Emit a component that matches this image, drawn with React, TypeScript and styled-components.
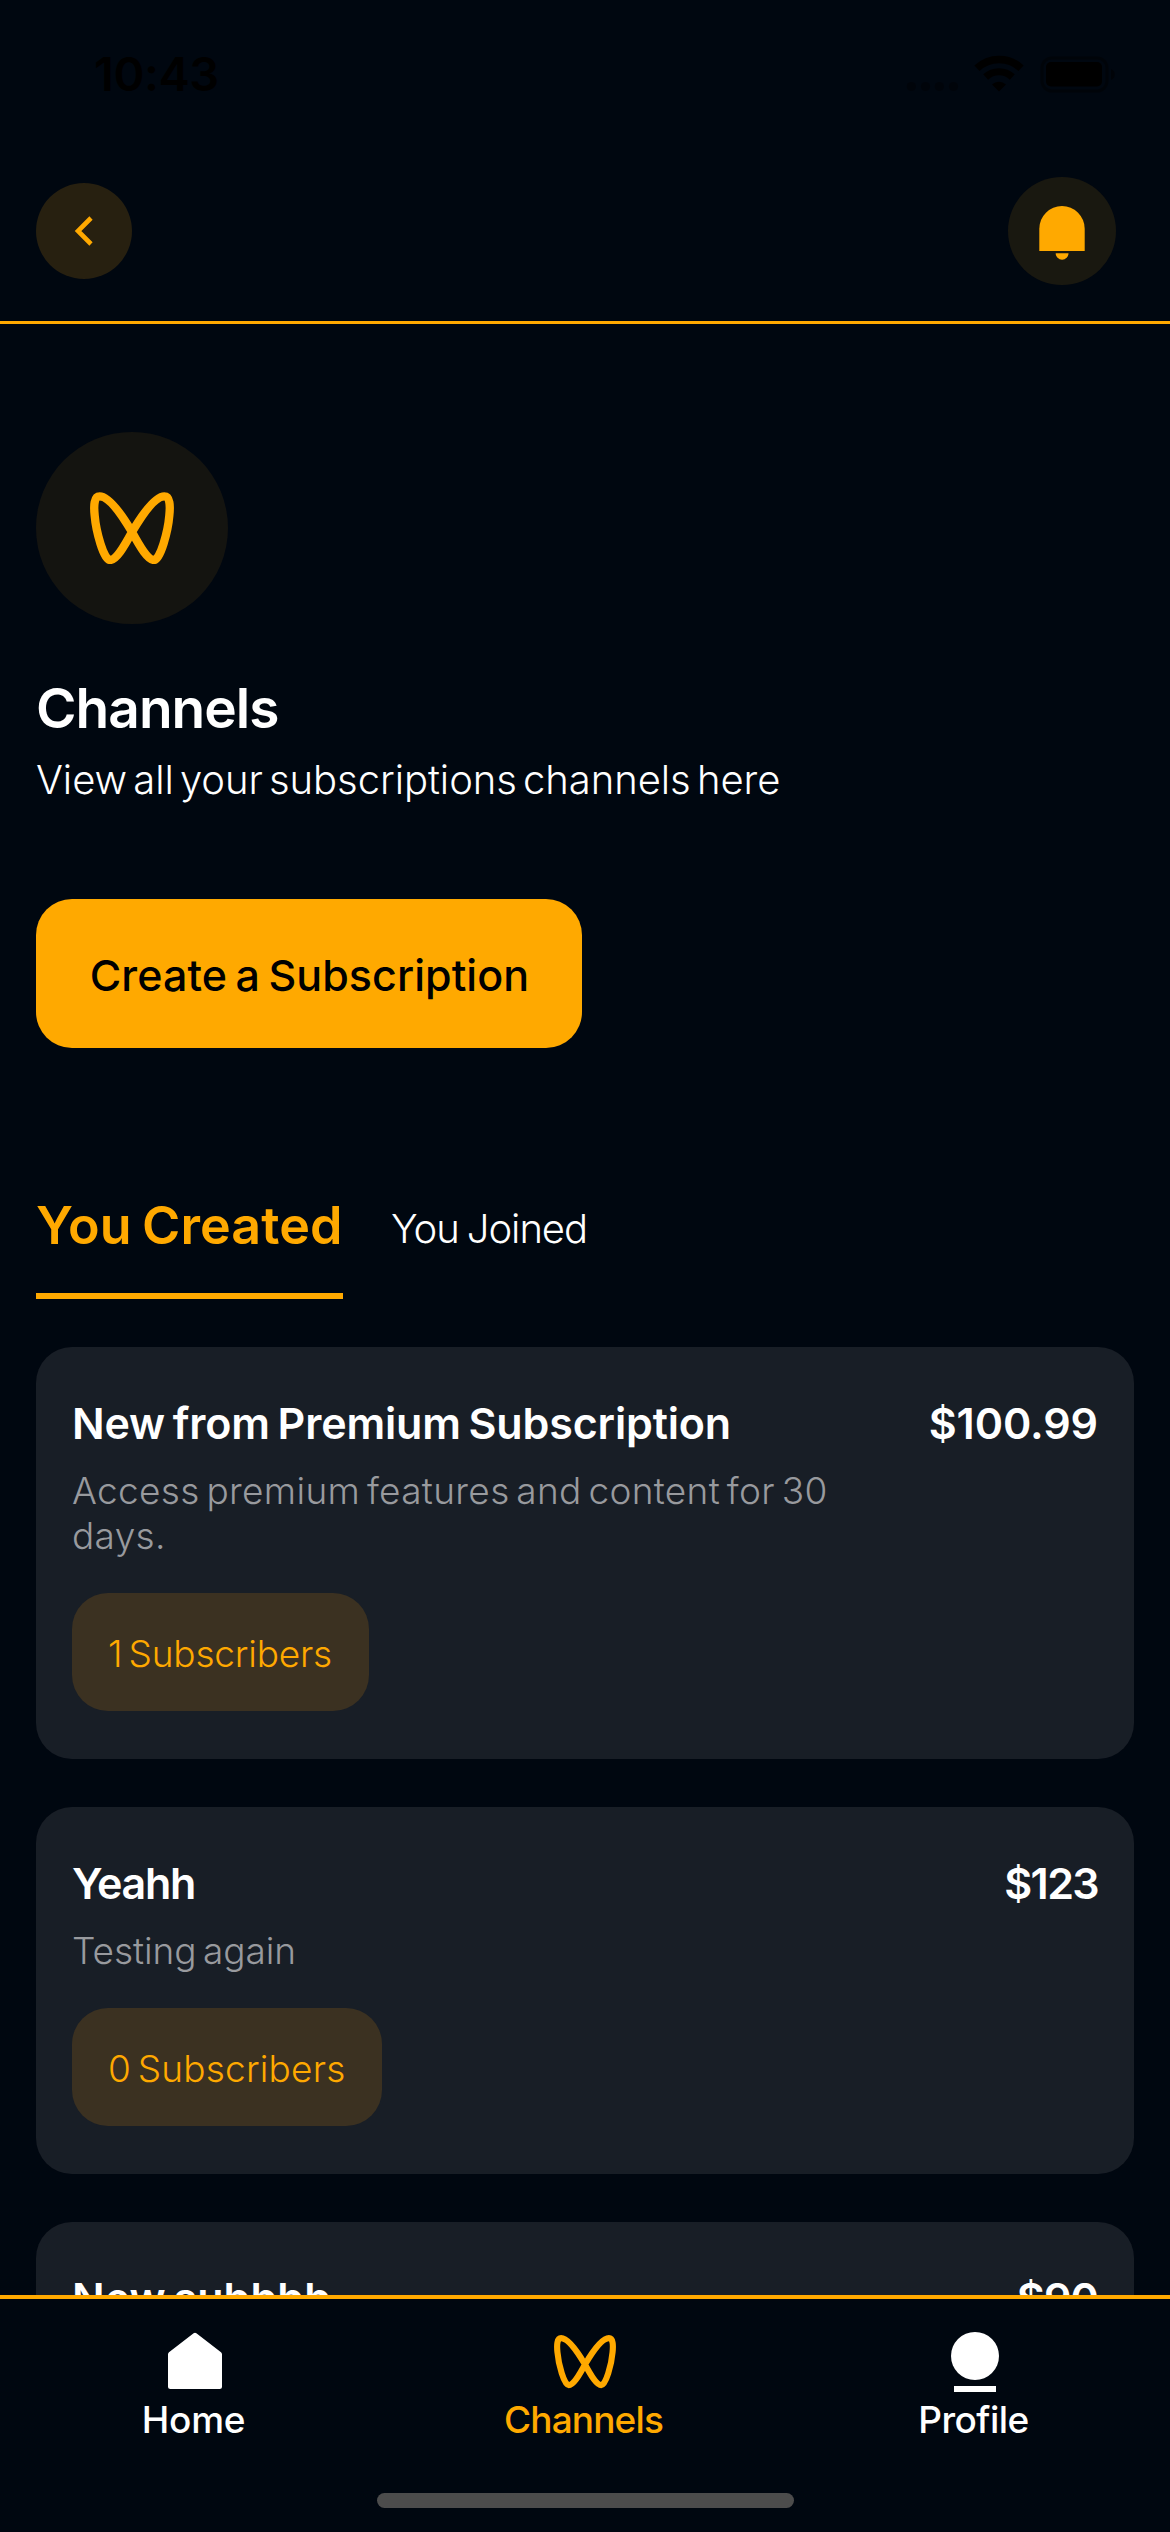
import React from "react";
import styled, { createGlobalStyle } from "styled-components";

const color = {
  bg: "#000710",
  accent: "#ffa900",
  card: "#181e26",
  pill: "#3b3121",
  white: "#ffffff",
  muted: "#989a9e",
};

const GlobalStyle = createGlobalStyle`
  *, *::before, *::after { box-sizing: border-box; }
  body { margin: 0; background: ${color.bg}; }
  button { border: 0; margin: 0; padding: 0; font: inherit; color: inherit; background: none; }
  h1, h2, p { margin: 0; }
  svg { display: block; flex: none; }
`;

const Screen = styled.div`
  width: 1170px;
  height: 2532px;
  display: flex;
  flex-direction: column;
  overflow: hidden;
  background: ${color.bg};
  color: ${color.white};
  font-family: Inter, "Liberation Sans", sans-serif;
`;

const StatusBar = styled.div`
  height: 141px;
  flex: none;
  display: flex;
  justify-content: space-between;
  align-items: flex-start;
  padding: 44px 53px 0 94px;
  color: #000;
`;

const Clock = styled.span`
  font-size: 47px;
  line-height: 60px;
  font-weight: 600;
  letter-spacing: -0.45px;
`;

const StatusIcons = styled.svg`
  margin-top: 10px;
`;

const Header = styled.header`
  flex: none;
  display: flex;
  justify-content: space-between;
  align-items: center;
  padding: 36px 54px 36px 36px;
  border-bottom: 3px solid ${color.accent};
`;

const RoundButton = styled.button<{ $size: number; $bg: string }>`
  width: ${(p) => p.$size}px;
  height: ${(p) => p.$size}px;
  border-radius: 50%;
  background: ${(p) => p.$bg};
  display: flex;
  align-items: center;
  justify-content: center;
`;

const Content = styled.main`
  flex: 1;
  min-height: 0;
  overflow: hidden;
  padding: 108px 36px 0;
  display: flex;
  flex-direction: column;
  align-items: flex-start;
`;

const HeroBadge = styled.div`
  width: 192px;
  height: 192px;
  flex: none;
  border-radius: 50%;
  background: #141410;
  display: flex;
  align-items: center;
  justify-content: center;
`;

const Title = styled.h1`
  margin-top: 50px;
  font-size: 55px;
  line-height: 69px;
  font-weight: 600;
  letter-spacing: -0.96px;
`;

const Subtitle = styled.p`
  margin-top: 11px;
  font-size: 40px;
  line-height: 52px;
  font-weight: 300;
  letter-spacing: -0.06px;
  word-spacing: -5px;
  white-space: nowrap;
`;

const PrimaryButton = styled.button`
  width: 546px;
  height: 149px;
  flex: none;
  margin-top: 93px;
  padding: 2px 0 0 1px;
  border-radius: 36px;
  background: ${color.accent};
  color: #000;
  font-size: 43px;
  line-height: 54px;
  font-weight: 500;
  letter-spacing: 0.05px;
  word-spacing: -3px;
`;

const Tabs = styled.div`
  flex: none;
  margin-top: 145px;
  display: flex;
  align-items: flex-start;
  gap: 48px;
`;

const Tab = styled.button<{ $active?: boolean }>`
  white-space: nowrap;
  text-align: left;
  ${(p) =>
    p.$active
      ? `
    width: 307px;
    padding-bottom: 34px;
    border-bottom: 6px solid ${color.accent};
    color: ${color.accent};
    font-size: 52px;
    line-height: 66px;
    font-weight: 600;
    letter-spacing: 0.1px;
    word-spacing: -3px;
  `
      : `
    margin-top: 10px;
    color: ${color.white};
    font-size: 40px;
    line-height: 52px;
    font-weight: 300;
    letter-spacing: -1.06px;
    word-spacing: -2px;
  `}
`;

const List = styled.div`
  flex: none;
  align-self: stretch;
  margin-top: 48px;
  display: flex;
  flex-direction: column;
  gap: 48px;
`;

const Card = styled.article`
  min-height: 367px;
  padding: 49px 36px 48px;
  border-radius: 36px;
  background: ${color.card};
  display: flex;
  flex-direction: column;
  align-items: flex-start;
`;

const CardHead = styled.div`
  align-self: stretch;
  display: flex;
  justify-content: space-between;
`;

const CardText = styled.h2<{ $tracking: number }>`
  font-size: 43px;
  line-height: 54px;
  font-weight: 600;
  letter-spacing: ${(p) => p.$tracking}px;
  word-spacing: -3px;
`;

const Description = styled.p<{ $tracking: number }>`
  margin-top: 18px;
  width: 790px;
  color: ${color.muted};
  font-size: 37px;
  line-height: 45px;
  font-weight: 300;
  letter-spacing: ${(p) => p.$tracking}px;
  word-spacing: -4px;
`;

const Pill = styled.span<{ $width: number; $tracking: number }>`
  width: ${(p) => p.$width}px;
  height: 118px;
  margin-top: 35px;
  padding: 3px 0 0 36px;
  border-radius: 36px;
  background: ${color.pill};
  color: ${color.accent};
  display: flex;
  align-items: center;
  font-size: 37px;
  line-height: 45px;
  font-weight: 300;
  letter-spacing: ${(p) => p.$tracking}px;
  word-spacing: -4px;
  white-space: nowrap;
`;

const BottomBar = styled.footer`
  height: 237px;
  flex: none;
  border-top: 4px solid ${color.accent};
  padding-top: 33px;
  background: ${color.bg};
  display: flex;
  flex-direction: column;
  align-items: center;
`;

const Nav = styled.nav`
  align-self: stretch;
  display: grid;
  grid-template-columns: repeat(3, 1fr);
`;

const NavItem = styled.button<{ $active?: boolean }>`
  display: flex;
  flex-direction: column;
  align-items: center;
  color: ${(p) => (p.$active ? color.accent : color.white)};
`;

const NavIcon = styled.span`
  width: 62px;
  height: 60px;
  display: flex;
  align-items: center;
  justify-content: center;
`;

const NavLabel = styled.span<{ $tracking: number }>`
  margin-top: 5px;
  padding-right: 3px;
  font-size: 37px;
  line-height: 45px;
  font-weight: 500;
  letter-spacing: ${(p) => p.$tracking}px;
`;

const HomeIndicator = styled.div`
  width: 417px;
  height: 15px;
  margin-top: 51px;
  border-radius: 8px;
  background: #4c4c4c;
`;

function Butterfly({ width }: { width: number }) {
  return (
    <svg width={width} height={(width * 216) / 252} viewBox="0 0 252 216" fill="none">
      <path
        d="M126 120C100 76 59 13 29 13C12 13 11 41 14 70C18 118 41 204 60 204C78 204 100 168 126 120C152 76 193 13 223 13C240 13 241 41 238 70C234 118 211 204 192 204C174 204 152 168 126 120Z"
        stroke="currentColor"
        strokeWidth="25"
        strokeLinejoin="round"
      />
    </svg>
  );
}

const HeroMark = styled.span`
  color: ${color.accent};
`;

function DeviceStatus() {
  return (
    <StatusIcons width="212" height="40" viewBox="905 54 212 40">
      <g opacity="0.35">
        <circle cx="911.3" cy="86.5" r="4.6" />
        <circle cx="925.5" cy="86.5" r="4.6" />
        <circle cx="939.3" cy="86.5" r="4.6" />
        <circle cx="953.5" cy="86.5" r="4.6" />
      </g>
      <g fill="none" stroke="#000">
        <path d="M977 68.2A32 32 0 0 1 1021 68.2" strokeWidth="7.6" />
        <path d="M985.7 77A19.5 19.5 0 0 1 1012.3 77" strokeWidth="7.2" />
      </g>
      <path d="M992 84.5A10 10 0 0 1 1006 84.5L999 91.5Z" />
      <rect x="1042" y="58" width="65" height="33" rx="10" fill="none" stroke="#000" strokeWidth="3" opacity="0.4" />
      <rect x="1046" y="62" width="56" height="24.5" rx="5" />
      <path d="M1111 69C1116 71 1116 78 1111 80Z" opacity="0.5" />
    </StatusIcons>
  );
}

interface Subscription {
  name: string;
  nameTracking: number;
  price: string;
  priceTracking: number;
  description?: string;
  descriptionTracking?: number;
  subscribers?: string;
  pillWidth?: number;
  pillTracking?: number;
}

const subscriptions: Subscription[] = [
  {
    name: "New from Premium Subscription",
    nameTracking: -0.15,
    price: "$100.99",
    priceTracking: -0.1,
    description: "Access premium features and content for 30 days.",
    descriptionTracking: 0.33,
    subscribers: "1 Subscribers",
    pillWidth: 297,
    pillTracking: -0.2,
  },
  {
    name: "Yeahh",
    nameTracking: -1.33,
    price: "$123",
    priceTracking: -1.65,
    description: "Testing again",
    descriptionTracking: -0.05,
    subscribers: "0 Subscribers",
    pillWidth: 310,
    pillTracking: 0.2,
  },
  { name: "New subbbb", nameTracking: 0.05, price: "$90", priceTracking: -0.9 },
];

export default function App() {
  return (
    <Screen>
      <GlobalStyle />
      <StatusBar>
        <Clock>10:43</Clock>
        <DeviceStatus />
      </StatusBar>
      <Header>
        <RoundButton $size={96} $bg="#272010" aria-label="Back">
          <svg width="96" height="96" viewBox="0 0 96 96" fill="none">
            <path d="M55 35L42 48L55 61" stroke={color.accent} strokeWidth="4.6" />
          </svg>
        </RoundButton>
        <RoundButton $size={108} $bg="#191810" aria-label="Notifications">
          <svg width="108" height="108" viewBox="0 0 108 108" fill={color.accent}>
            <path d="M31.3 74V51.7a22.7 22.7 0 0 1 45.4 0V74Z" />
            <path d="M47.7 76.3h12.8a6.4 6.4 0 0 1-12.8 0Z" />
          </svg>
        </RoundButton>
      </Header>

      <Content>
        <HeroBadge>
          <HeroMark>
            <Butterfly width={84} />
          </HeroMark>
        </HeroBadge>
        <Title>Channels</Title>
        <Subtitle>View all your subscriptions channels here</Subtitle>
        <PrimaryButton>Create a Subscription</PrimaryButton>
        <Tabs>
          <Tab $active>You Created</Tab>
          <Tab>You Joined</Tab>
        </Tabs>
        <List>
          {subscriptions.map((s) => (
            <Card key={s.name}>
              <CardHead>
                <CardText $tracking={s.nameTracking}>{s.name}</CardText>
                <CardText as="span" $tracking={s.priceTracking}>
                  {s.price}
                </CardText>
              </CardHead>
              {s.description && (
                <Description $tracking={s.descriptionTracking ?? 0}>{s.description}</Description>
              )}
              {s.subscribers && (
                <Pill $width={s.pillWidth ?? 297} $tracking={s.pillTracking ?? 0}>
                  {s.subscribers}
                </Pill>
              )}
            </Card>
          ))}
        </List>
      </Content>

      <BottomBar>
        <Nav>
          <NavItem>
            <NavIcon>
              <svg width="60" height="60" viewBox="0 0 60 60" fill="currentColor">
                <path d="M28.6 1.3a2.2 2.2 0 0 1 2.8 0L56 20.2a2.8 2.8 0 0 1 1 2.2V54.5a2.5 2.5 0 0 1-2.5 2.5h-49A2.5 2.5 0 0 1 3 54.5V22.4a2.8 2.8 0 0 1 1-2.2Z" />
              </svg>
            </NavIcon>
            <NavLabel $tracking={-0.25}>Home</NavLabel>
          </NavItem>
          <NavItem $active>
            <NavIcon>
              <Butterfly width={62} />
            </NavIcon>
            <NavLabel $tracking={-0.85}>Channels</NavLabel>
          </NavItem>
          <NavItem>
            <NavIcon>
              <svg width="60" height="60" viewBox="0 0 60 60" fill="currentColor">
                <circle cx="30" cy="24" r="24" />
                <rect x="9" y="54" width="42" height="6" />
              </svg>
            </NavIcon>
            <NavLabel $tracking={-0.5}>Profile</NavLabel>
          </NavItem>
        </Nav>
        <HomeIndicator />
      </BottomBar>
    </Screen>
  );
}
